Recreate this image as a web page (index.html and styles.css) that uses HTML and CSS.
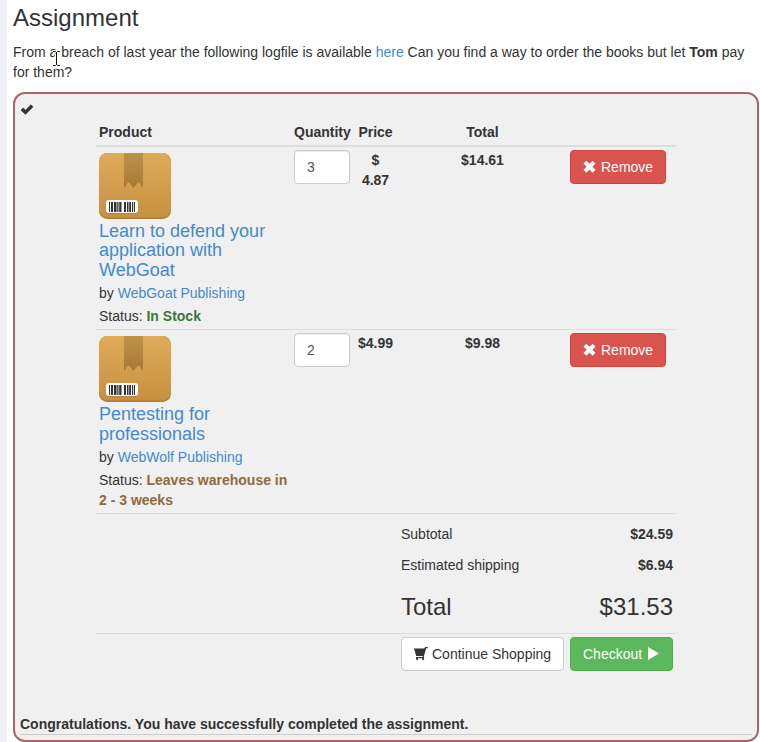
FILE: index.html
```html
<!DOCTYPE html>
<html lang="en">
<head>
<meta charset="utf-8">
<title>Assignment</title>
<link rel="stylesheet" href="styles.css">
</head>
<body>
<svg class="defs" width="0" height="0" aria-hidden="true">
  <defs>
    <linearGradient id="box" x1="0" y1="0" x2="0" y2="1"><stop offset="0" stop-color="#dfab59"/><stop offset="1" stop-color="#c69041"/></linearGradient>
    <linearGradient id="tape" x1="0" y1="0" x2="0" y2="1"><stop offset="0" stop-color="#bd934b"/><stop offset="1" stop-color="#a77934"/></linearGradient>
    <symbol id="package" viewBox="0 0 72 72">
      <rect y="3" width="72" height="66" rx="8.5" fill="#b07b35"/>
      <rect y="3" width="72" height="64.5" rx="8.5" fill="url(#box)"/>
      <path d="M25 3h19v35l-3.500-5q-1-1-2 0L34.500 38l-4-5q-1-1-2 0L25 38z" fill="url(#tape)"/>
      <rect x="7" y="50.5" width="32" height="13.5" rx="3" fill="#a87632" opacity=".6"/>
      <rect x="7" y="50" width="32" height="13" rx="3" fill="#fff"/>
      <path d="M10 52h1v10h-1zM12 52h2v10h-2zM15 52h2.500v10H15zM18.200 52h1.300v10h-1.300zM20.200 52h2.300v10h-2.300zM25 52h2v10h-2zM28 52h1.500v10H28zM30.200 52h1.800v10h-1.800zM33 52h1.200v10H33zM35 52h1v10h-1z" fill="#333"/>
    </symbol>
    <symbol id="remove" viewBox="0 0 14 14"><path d="M3.400.7 6.500 3.800 9.600.7l2.900 2.900-3.100 3.100 3.100 3.100-2.900 2.900-3.100-3.100-3.100 3.100L.5 9.800l3.100-3.100L.5 3.600z" fill="currentColor"/></symbol>
  </defs>
</svg>
<main class="page">
  <h1 class="heading">Assignment</h1>
  <p class="intro">From a breach of last year the following logfile is available <a href="#">here</a> Can you find a way to order the books but let <strong>Tom</strong> pay for them?</p>
  <section class="card">
    <svg class="check" viewBox="0 0 14 12"><path d="M1 7.200 3.200 5l2.300 2.200L11 1.800l2 2L5.500 11.200z" fill="#333" stroke="#333" stroke-width=".8" stroke-linejoin="round"/></svg>
    <table class="cart">
      <colgroup><col class="c-product"><col class="c-qty"><col class="c-price"><col class="c-total"><col class="c-action"></colgroup>
      <thead>
        <tr><th class="left">Product</th><th>Quantity</th><th>Price</th><th>Total</th><th></th></tr>
      </thead>
      <tbody>
        <tr class="item first">
          <td>
            <svg class="package"><use href="#package"/></svg>
            <h4 class="title"><a href="#">Learn to defend your application with WebGoat</a></h4>
            <h5 class="by">by <a href="#">WebGoat Publishing</a></h5>
            <div class="status">Status: <strong class="ok">In Stock</strong></div>
          </td>
          <td><input class="qty" value="3"></td>
          <td class="center"><strong>$<br>4.87</strong></td>
          <td class="center"><strong>$14.61</strong></td>
          <td><button class="btn danger"><svg class="icon"><use href="#remove"/></svg> Remove</button></td>
        </tr>
        <tr class="item second">
          <td>
            <svg class="package"><use href="#package"/></svg>
            <h4 class="title"><a href="#">Pentesting for professionals</a></h4>
            <h5 class="by">by <a href="#">WebWolf Publishing</a></h5>
            <div class="status">Status: <strong class="wait">Leaves warehouse in 2&nbsp;-&nbsp;3 weeks</strong></div>
          </td>
          <td><input class="qty" value="2"></td>
          <td class="center"><strong>$4.99</strong></td>
          <td class="center"><strong>$9.98</strong></td>
          <td><button class="btn danger"><svg class="icon"><use href="#remove"/></svg> Remove</button></td>
        </tr>
        <tr class="sum subtotal"><td colspan="3"></td><td>Subtotal</td><td class="right"><strong>$24.59</strong></td></tr>
        <tr class="sum shipping"><td colspan="3"></td><td>Estimated shipping</td><td class="right"><strong>$6.94</strong></td></tr>
        <tr class="sum grand"><td colspan="3"></td><td>Total</td><td class="right">$31.53</td></tr>
        <tr class="actions">
          <td colspan="3"></td>
          <td><button class="btn plain"><svg class="icon" viewBox="0 0 14 14"><path d="M0 1.500h10.200L11.200 0h2.600v1.300h-1.700L9.900 9.300v1.500h.3l-.2 1.500a.9.900 0 0 1-1.800 0v-1.100H4v1.100a.9.900 0 0 1-1.800 0v-1.500H2V9.900h6.600l.2-1H2.200z" fill="currentColor"/></svg> Continue Shopping</button></td>
          <td><button class="btn success">Checkout <svg class="icon" viewBox="0 0 14 14"><path d="M2 0v13L13 6.500z" fill="currentColor"/></svg></button></td>
        </tr>
      </tbody>
    </table>
    <div class="feedback">Congratulations. You have successfully completed the assignment.</div>
  </section>
</main>
<svg class="cursor" viewBox="0 0 9 17"><path d="M1 1.500h2.500l1 1 1-1H8M4.500 2v13M1 15.500h2.500l1-1 1 1H8" fill="none" stroke="#fff" stroke-width="3"/><path d="M1 1.500h2.500l1 1 1-1H8M4.500 2v13M1 15.500h2.500l1-1 1 1H8" fill="none" stroke="#111" stroke-width="1"/></svg>
</body>
</html>
```
FILE: styles.css
```css
* { box-sizing: border-box; }
html, body { height: 742px; overflow: hidden; }
body {
  margin: 0;
  background: #fff;
  border-left: 7px solid #f0f0f7;
  color: #333;
  font: 14px/20px "Liberation Sans", Arial, sans-serif;
}
.defs { position: absolute; }
a { color: #428bca; text-decoration: none; }
.page { padding: 5px 1px 0 6px; }
.heading { margin: 0 0 11px; font-size: 24px; font-weight: 400; line-height: 26px; }
.intro { margin: 0 0 10px; }
.card {
  height: 650px;
  padding: 9px 5px 0;
  background: #f0f0f0;
  border: 2px solid #a66;
  border-radius: 12px;
}
.check { display: block; width: 14px; height: 12px; }
.cart {
  width: 580px;
  margin: 4px 0 0 76px;
  table-layout: fixed;
  border-collapse: separate;
  border-spacing: 0;
}
.c-product { width: 195px; }
.c-qty { width: 62px; }
.c-price { width: 45px; }
.c-total { width: 169px; }
.c-action { width: 109px; }
th, td { padding: 3px; vertical-align: top; }
th { height: 28px; text-align: center; border-bottom: 2px solid #ddd; }
td { text-align: left; }
.left { text-align: left; }
.center { text-align: center; }
.right { text-align: right; }
.first td { height: 182px; }
.second td { height: 184px; border-top: 1px solid #ddd; }
.package { display: block; width: 72px; height: 72px; }
.title { margin: 0 0 5px; font-size: 18px; font-weight: 400; line-height: 19.8px; }
.first .title { margin: -.4px 0 5.4px; line-height: 19.6px; }
.by { margin: 0 0 5px; font-size: 14px; font-weight: 400; line-height: 15.4px; }
.first .by { margin-bottom: 4.6px; }
.qty {
  display: block;
  width: 56px;
  height: 34px;
  padding: 6px 12px;
  font: inherit;
  color: #555;
  background: #fff;
  border: 1px solid #ccc;
  border-radius: 4px;
  box-shadow: inset 0 1px 1px rgba(0, 0, 0, .075);
}
.ok { color: #3c763d; }
.wait { color: #8a6d3b; }
.btn {
  display: flex;
  align-items: center;
  gap: 4px;
  height: 34px;
  padding: 0 12px;
  font: inherit;
  white-space: nowrap;
  border: 1px solid;
  border-radius: 4px;
}
.icon { width: 14px; height: 14px; flex: none; }
.danger { width: 96px; color: #fff; background: #d9534f; border-color: #d43f3a; }
.plain { width: 163px; color: #333; background: #fff; border-color: #ccc; }
.success { width: 103px; color: #fff; background: #5cb85c; border-color: #4cae4c; }
.sum td { padding: 0 3px; vertical-align: middle; }
.subtotal td { height: 40px; border-top: 1px solid #ddd; }
.sum.shipping td { height: 22px; padding-top: 2px; }
.sum.grand td { height: 58px; padding-top: 6px; font-size: 24px; line-height: 26px; }
.actions td { border-top: 1px solid #ddd; }
.feedback {
  margin-top: 40px;
  font-weight: 700;
  border-bottom: 1px solid #ccc;
}
.cursor { position: absolute; left: 52px; top: 50px; width: 9px; height: 17px; }
```
